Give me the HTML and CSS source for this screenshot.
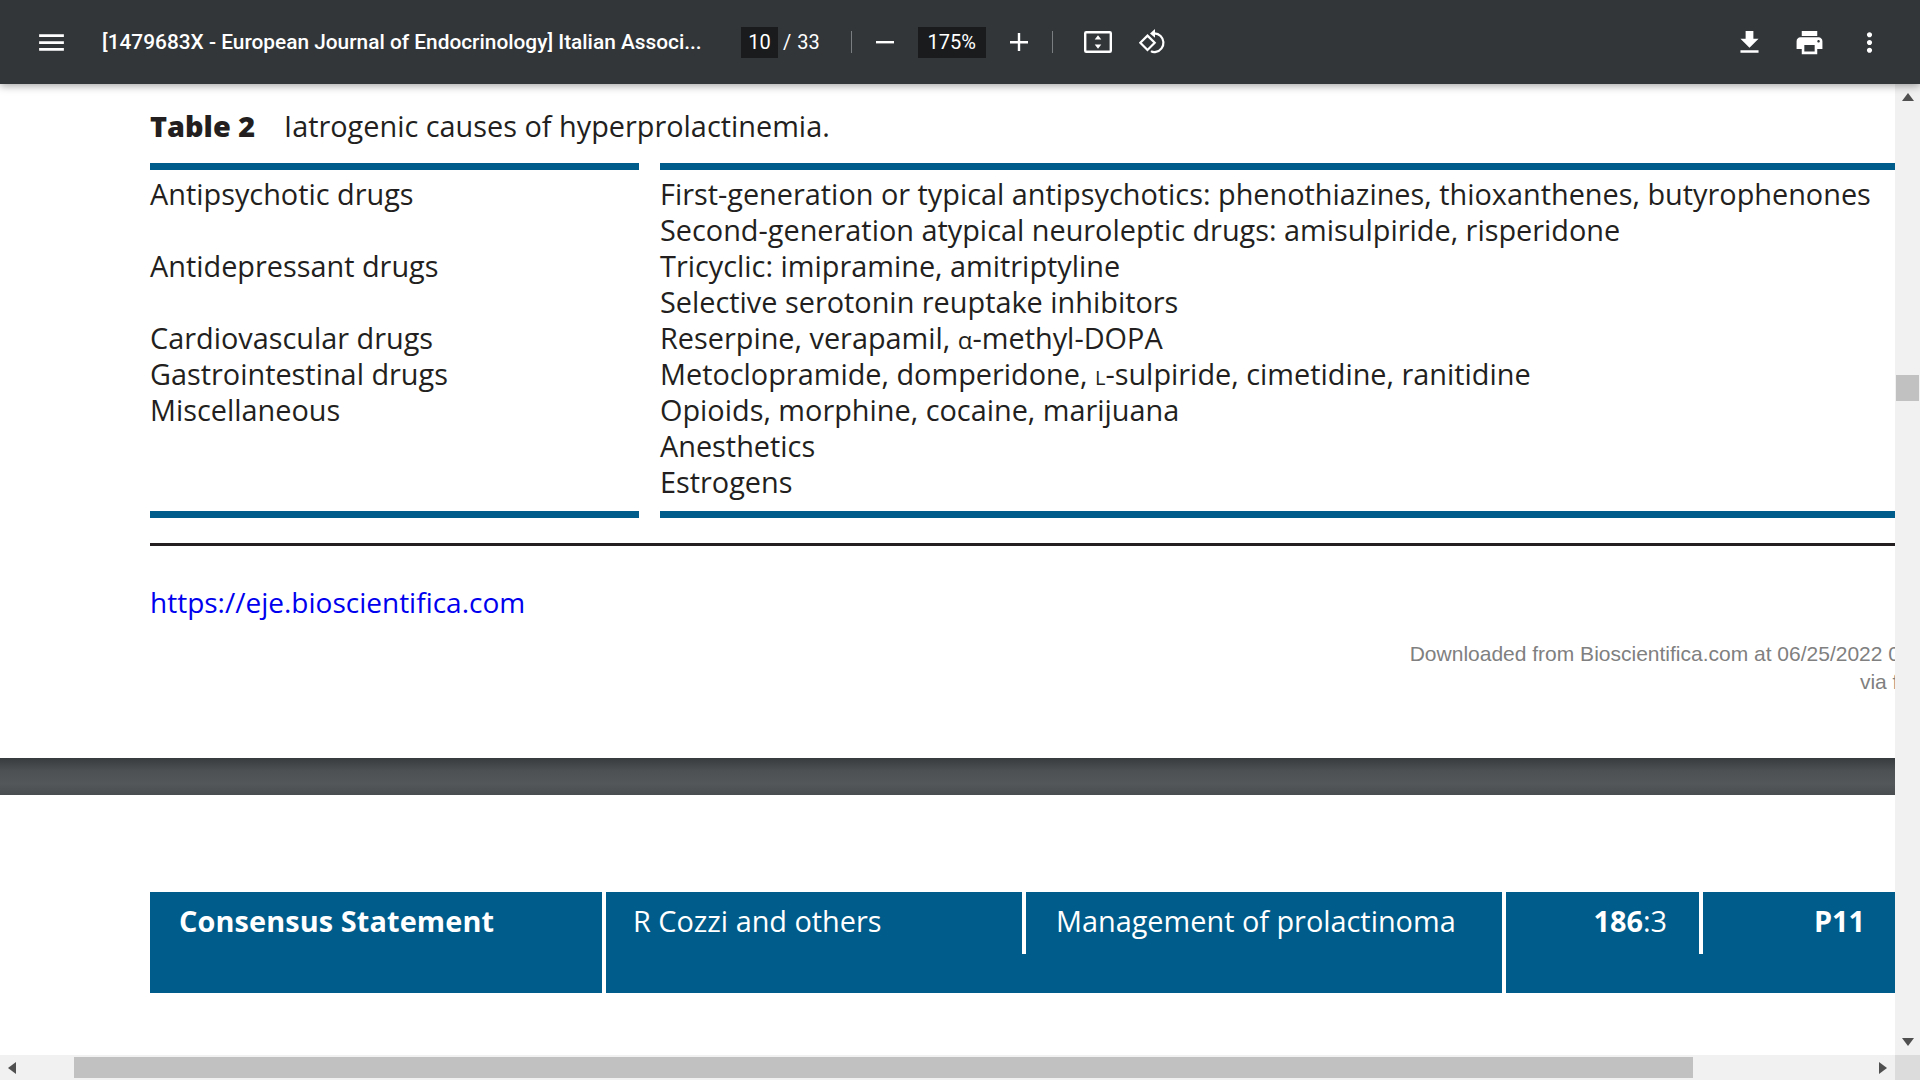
FILE: index.html
```html
<!DOCTYPE html>
<html lang="en">
<head>
<meta charset="utf-8">
<title>PDF viewer</title>
<link rel="stylesheet" href="styles.css">
</head>
<body>
<div class="app">
  <header class="toolbar">
    <svg class="ico-menu" viewBox="0 0 24 24"><path d="M3 18h18v-2H3v2zm0-5h18v-2H3v2zm0-7v2h18V6H3z"/></svg>
    <div class="doc-title">[1479683X - European Journal of Endocrinology] Italian Associ...</div>
    <div class="page-input">10</div>
    <span class="page-slash">/</span>
    <span class="page-total">33</span>
    <span class="sep sep-a"></span>
    <svg class="ico-minus" viewBox="0 0 18 18"><rect x="0" y="8" width="18" height="2.4"/></svg>
    <div class="zoom-input">175%</div>
    <svg class="ico-plus" viewBox="0 0 18 18"><path d="M0 8h7.8V0h2.4v8H18v2.4h-7.8V18H7.8v-7.6H0z"/></svg>
    <span class="sep sep-b"></span>
    <svg class="ico-fit" viewBox="0 0 28 22"><rect x="1.2" y="1.2" width="25.6" height="19.6" rx="1" fill="none" stroke="currentColor" stroke-width="2.4"/><path d="M14 4.2l3.3 4.4h-6.6zM14 17.8l-3.3-4.4h6.6z"/></svg>
    <svg class="ico-rotate" viewBox="0 0 28 28"><path d="M8.5 9.8l7.2 7.2-7.2 7.2-7.2-7.2z" transform="translate(0 -2.2)" fill="none" stroke="currentColor" stroke-width="2.2"/><path d="M15.5 5.3a9.4 9.4 0 0 1 1.4 18.6c-1.5.3-3.6.1-4.9-.8" fill="none" stroke="currentColor" stroke-width="2.2"/><path d="M11 5.4L16 1v8.8z"/></svg>
    <div class="toolbar-right">
      <svg class="ico-act" viewBox="0 0 24 24"><path d="M19 9h-4V3H9v6H5l7 7 7-7zM5 18v2h14v-2H5z"/></svg>
      <svg class="ico-act" viewBox="0 0 24 24"><path d="M19 8H5c-1.66 0-3 1.34-3 3v6h4v4h12v-4h4v-6c0-1.66-1.34-3-3-3zm-3 11H8v-5h8v5zm3-7c-.55 0-1-.45-1-1s.45-1 1-1 1 .45 1 1-.45 1-1 1zm-1-9H6v4h12V3z"/></svg>
      <svg class="ico-act" viewBox="0 0 24 24"><path d="M12 8c1.1 0 2-.9 2-2s-.9-2-2-2-2 .9-2 2 .9 2 2 2zm0 2c-1.1 0-2 .9-2 2s.9 2 2 2 2-.9 2-2-.9-2-2-2zm0 6c-1.1 0-2 .9-2 2s.9 2 2 2 2-.9 2-2-.9-2-2-2z"/></svg>
    </div>
  </header>

  <div class="middle">
    <main class="viewport">
      <section class="page-top">
        <h2 class="table-title"><span class="table-label">Table 2</span><span class="table-caption">Iatrogenic causes of hyperprolactinemia.</span></h2>
        <div class="table">
          <div class="cell">Antipsychotic drugs</div><div class="cell">First-generation or typical antipsychotics: phenothiazines, thioxanthenes, butyrophenones</div>
          <div class="cell"></div><div class="cell">Second-generation atypical neuroleptic drugs: amisulpiride, risperidone</div>
          <div class="cell">Antidepressant drugs</div><div class="cell">Tricyclic: imipramine, amitriptyline</div>
          <div class="cell"></div><div class="cell">Selective serotonin reuptake inhibitors</div>
          <div class="cell">Cardiovascular drugs</div><div class="cell">Reserpine, verapamil, <span class="alpha">α</span>-methyl-DOPA</div>
          <div class="cell">Gastrointestinal drugs</div><div class="cell">Metoclopramide, domperidone, <span class="smallcap">l</span>-sulpiride, cimetidine, ranitidine</div>
          <div class="cell">Miscellaneous</div><div class="cell">Opioids, morphine, cocaine, marijuana</div>
          <div class="cell"></div><div class="cell">Anesthetics</div>
          <div class="cell"></div><div class="cell">Estrogens</div>
        </div>
        <div class="black-rule"></div>
        <a class="journal-link" href="#">https://eje.bioscientifica.com</a>
        <div class="download-note">
          <div class="note-line">Downloaded from Bioscientifica.com at 06/25/2022 02:11:36PM</div>
          <div class="note-line note-via">via free access</div>
        </div>
      </section>
      <div class="page-gap"></div>
      <section class="page-next">
        <div class="running-head">
          <div class="head-group head-g1"><div class="head-cell head-bold">Consensus Statement</div></div>
          <div class="head-group head-g2">
            <div class="head-cell head-author">R Cozzi and others</div>
            <div class="head-cell head-topic">Management of prolactinoma</div>
          </div>
          <div class="head-group head-g3">
            <div class="head-cell head-vol"><b>186</b>:3</div>
            <div class="head-cell head-page"><b>P11</b></div>
          </div>
        </div>
      </section>
    </main>
    <aside class="vscroll">
      <svg class="arrow arrow-up" viewBox="0 0 12 8"><path d="M6 0l6 8H0z"/></svg>
      <div class="vthumb"></div>
      <svg class="arrow arrow-down" viewBox="0 0 12 8"><path d="M0 0h12L6 8z"/></svg>
    </aside>
  </div>

  <div class="hscroll-row">
    <div class="hscroll">
      <svg class="arrow-h" viewBox="0 0 8 12"><path d="M8 0v12L0 6z"/></svg>
      <div class="hthumb"></div>
      <svg class="arrow-h arrow-right" viewBox="0 0 8 12"><path d="M0 0l8 6-8 6z"/></svg>
    </div>
    <div class="corner"></div>
  </div>
</div>
</body>
</html>
```

FILE: styles.css
```css
* { box-sizing: border-box; }
html, body { margin: 0; height: 100%; overflow: hidden; background: #fff; }
.app { display: flex; flex-direction: column; width: 1920px; height: 1080px; }

/* toolbar */
.toolbar {
  position: relative; z-index: 2;
  flex: 0 0 84px; display: flex; align-items: center;
  background: #323639; color: #fff;
  font-family: Roboto, sans-serif;
  box-shadow: 0 2px 8px rgba(0,0,0,.35);
  fill: #fff;
}
.toolbar svg { flex: none; display: block; }
.ico-menu { width: 33px; height: 33px; margin-left: 35px; }
.doc-title { margin-left: 34px; width: 620px; font-size: 20.85px; font-weight: 500; white-space: nowrap; }
.page-input, .zoom-input {
  height: 31px; background: #191b1c; display: flex; align-items: center; justify-content: center;
  font-size: 20px;
}
.page-input { width: 37px; margin-left: 19px; }
.page-slash { margin-left: 5px; font-size: 20px; }
.page-total { margin-left: 6px; font-size: 20px; }
.sep { width: 1px; height: 22px; background: #7b7e80; }
.sep-a { margin-left: 31px; }
.ico-minus { width: 18px; height: 18px; margin-left: 24px; }
.zoom-input { width: 68px; margin-left: 24px; }
.ico-plus { width: 18px; height: 18px; margin-left: 24px; }
.sep-b { margin-left: 24px; }
.ico-fit { width: 28px; height: 22px; margin-left: 31px; color: #fff; }
.ico-rotate { width: 28px; height: 28px; margin-left: 27px; color: #fff; }
.toolbar-right { margin-left: auto; margin-right: 35px; display: flex; gap: 29px; }
.ico-act { width: 31px; height: 31px; }

/* viewport */
.middle { flex: 1; min-height: 0; display: flex; }
.viewport { flex: 1; min-width: 0; overflow: hidden; background: #fff; font-family: "Open Sans", sans-serif; color: #231f20; }
.page-top { height: 674px; padding-left: 150px; }
.table-title { margin: 0; height: 79px; padding-top: 22px; font-size: 28.85px; line-height: 40px; font-weight: 400; white-space: nowrap; }
.table-label { font-weight: 800; }
.table-caption { margin-left: 29px; }
.table {
  display: grid; grid-template-columns: 489px 1fr; column-gap: 21px;
  padding: 13px 0 18px;
  background:
    linear-gradient(#005c8a,#005c8a) 0 0 / 489px 7px no-repeat,
    linear-gradient(#005c8a,#005c8a) 510px 0 / 100% 7px no-repeat,
    linear-gradient(#005c8a,#005c8a) 0 100% / 489px 7px no-repeat,
    linear-gradient(#005c8a,#005c8a) 510px 100% / 100% 7px no-repeat;
}
.cell { font-size: 28.85px; line-height: 36px; height: 36px; white-space: nowrap; }
.alpha { font-size: 24px; }
.smallcap { font-variant: small-caps; }
.black-rule { height: 3px; margin-top: 25px; background: #231f20; }
.journal-link { display: block; margin-top: 36px; font-size: 28px; line-height: 40px; color: #0000ee; text-decoration: none; width: max-content; }
.download-note { margin-top: 18px; margin-right: -105px; text-align: right; font-family: "Liberation Sans", sans-serif; font-size: 21px; line-height: 28px; color: #808080; white-space: nowrap; }
.page-gap { height: 37px; background: linear-gradient(#383b3d, #4e5154 35%, #54575a 70%, #4a4d4f); }
.page-next { padding: 97px 0 0 150px; }
.running-head { display: flex; gap: 4px; color: #fff; font-size: 28.85px; line-height: 36px; }
.head-group { display: flex; height: 101px; background: #005c8a; }
.head-g1 { width: 452px; }
.head-g2 { width: 896px; }
.head-g3 { width: 389px; }
.head-cell { height: 62px; padding-top: 11px; white-space: nowrap; }
.head-bold { padding-left: 29px; font-weight: 700; letter-spacing: .12px; }
.head-author { width: 420px; padding-left: 27px; border-right: 4px solid #fff; }
.head-topic { padding-left: 30px; }
.head-vol { width: 197px; padding-right: 32px; text-align: right; border-right: 4px solid #fff; }
.head-page { width: 192px; padding-right: 30px; text-align: right; }
.head-cell b { font-weight: 700; }

/* scrollbars */
.vscroll { flex: 0 0 25px; background: #f1f1f1; display: flex; flex-direction: column; align-items: center; fill: #505050; }
.arrow { width: 12px; height: 8px; flex: none; display: block; }
.arrow-up { margin-top: 9px; }
.vthumb { width: 23px; height: 26px; margin-top: 274px; background: #c1c1c1; }
.arrow-down { margin-top: auto; margin-bottom: 9px; }
.hscroll-row { flex: 0 0 25px; display: flex; }
.hscroll { flex: 1; background: #f1f1f1; display: flex; align-items: center; fill: #505050; padding-left: 8px; padding-right: 8px; }
.arrow-h { width: 8px; height: 12px; flex: none; display: block; }
.arrow-right { margin-left: auto; }
.hthumb { width: 1619px; height: 21px; margin-left: 58px; background: #c1c1c1; }
.corner { flex: 0 0 25px; background: #dcdcdc; }
```
